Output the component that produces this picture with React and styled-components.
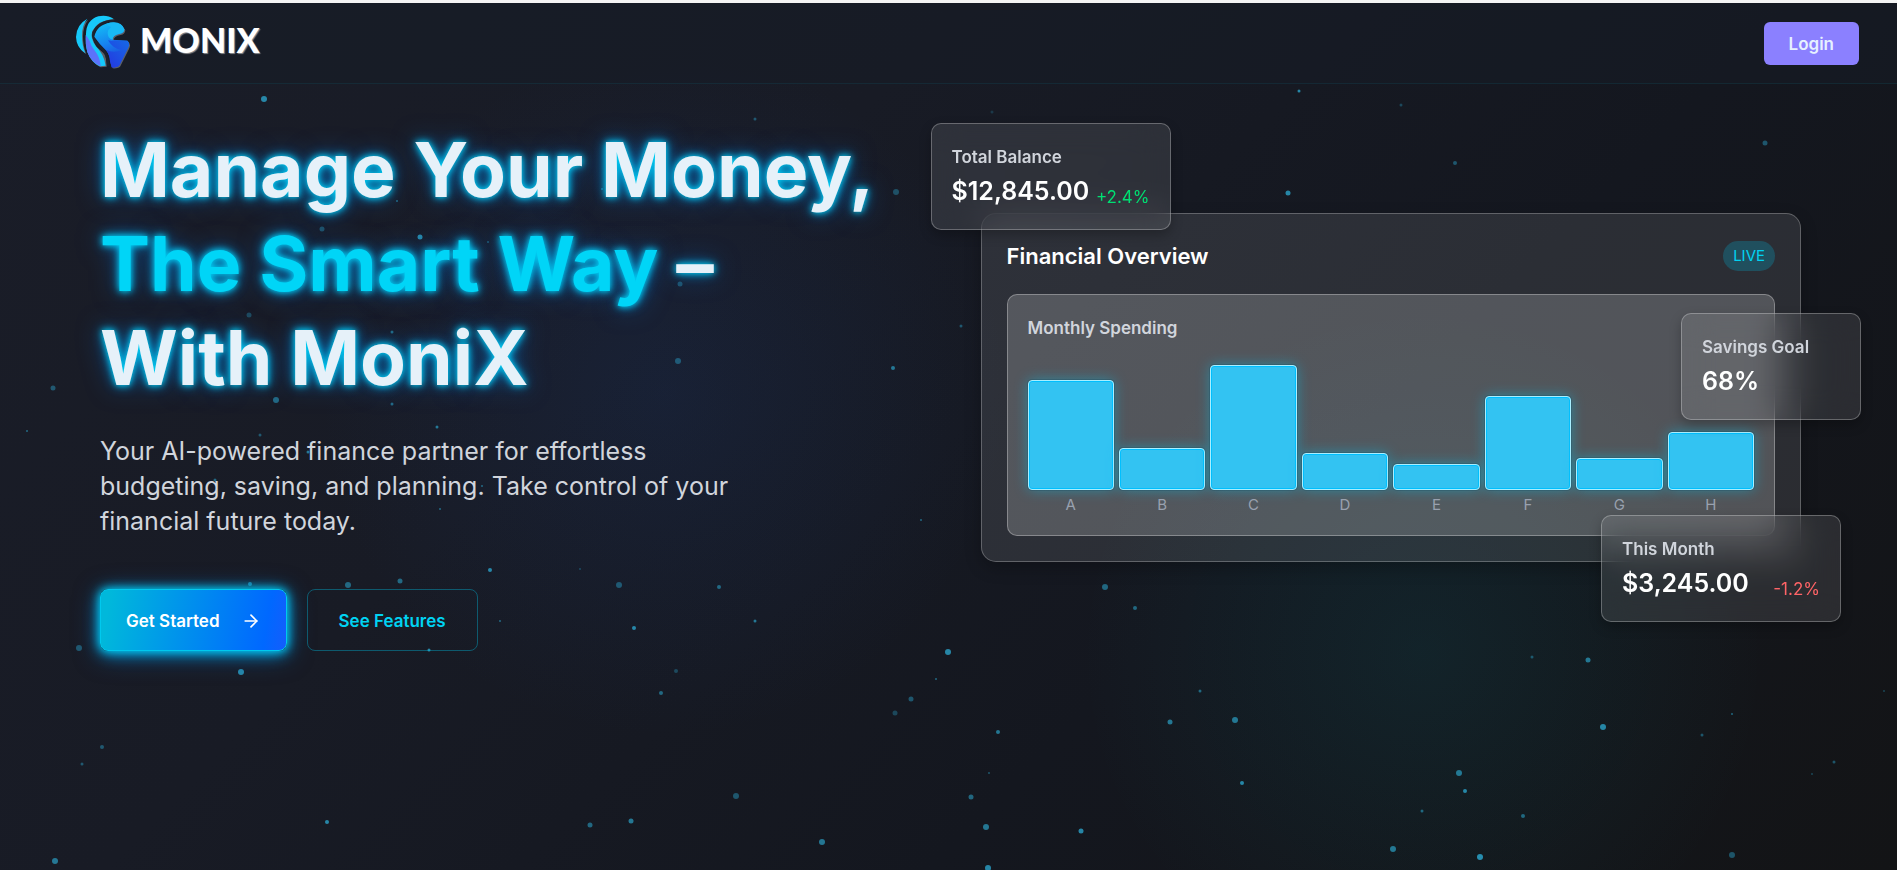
import React from 'react';
import styled, { createGlobalStyle } from 'styled-components';
import { ArrowRight } from 'lucide-react';

const GlobalStyle = createGlobalStyle`
  *, *::before, *::after { box-sizing: border-box; }
  body {
    margin: 0;
    background: #15171d;
    font-family: Inter, "Liberation Sans", sans-serif;
  }
  h1, h2, h3, p { margin: 0; }
  button { font-family: inherit; cursor: pointer; }
`;

const Page = styled.div`
  position: relative;
  isolation: isolate;
  display: flex;
  flex-direction: column;
  min-height: 100vh;
  overflow: hidden;
  border-top: 3px solid #f4f4f4;
  background:
    radial-gradient(circle at 75% 75%, rgba(0, 190, 200, 0.08), transparent 22%),
    radial-gradient(circle at 35% 45%, rgba(28, 70, 150, 0.15), transparent 26%),
    linear-gradient(135deg, #1a1d28 0%, #181b25 35%, #14171f 65%, #131416 100%);
`;

const Particles = styled.svg`
  position: absolute;
  inset: 0;
  z-index: -1;
  width: 100%;
  height: 100%;
`;

const Header = styled.header`
  display: flex;
  align-items: center;
  justify-content: space-between;
  height: 81px;
  padding: 0 38px 0 75px;
  border-bottom: 1px solid rgba(0, 211, 242, 0.08);
  background: rgba(22, 28, 37, 0.5);
`;

const Logo = styled.a`
  display: flex;
  align-items: flex-start;
  gap: 9px;
  padding-bottom: 2px;
  color: #ffffff;
  font: 900 34px/52px Lato, "Open Sans", sans-serif;
  text-decoration: none;
  text-shadow: 1px 1px 1px rgba(190, 190, 190, 0.7);
`;

const LoginButton = styled.button`
  padding: 11px 25px 9px;
  border: 0;
  border-radius: 6px;
  background: #8b80ff;
  color: #e6f1ff;
  font-size: 17px;
  font-weight: 600;
  line-height: 23px;
`;

const Hero = styled.main`
  display: grid;
  grid-template-columns: repeat(2, minmax(0, 1fr));
  gap: 60px;
  padding: 39px 96px 40px 100px;
`;

const Headline = styled.h1`
  color: #e6f1f9;
  font-size: 75px;
  font-weight: 700;
  line-height: 94px;
  white-space: nowrap;
  text-shadow: 0 0 6px #00d5f7, 0 0 12px rgba(0, 170, 235, 0.9), 0 0 26px rgba(0, 110, 220, 0.6);
`;

const Accent = styled.span`
  color: #00d5f7;
`;

const Lead = styled.p`
  max-width: 640px;
  margin-top: 29px;
  color: #d1d5dc;
  font-size: 25px;
  line-height: 35px;
`;

const Actions = styled.div`
  display: flex;
  gap: 20px;
  margin-top: 50px;
`;

const ActionButton = styled.button`
  display: flex;
  align-items: center;
  gap: 21px;
  height: 62px;
  padding: 2px ${({ $primary }) => ($primary ? 25 : 31)}px 0;
  border: 1px solid ${({ $primary }) => ($primary ? '#00c9ee' : 'rgba(0, 184, 219, 0.4)')};
  border-radius: 8px;
  background: ${({ $primary }) =>
    $primary ? 'linear-gradient(100deg, #00b8db 5%, #0068ff 88%, #155dfc)' : 'transparent'};
  color: ${({ $primary }) => ($primary ? '#ffffff' : '#00d3f2')};
  font-size: 17px;
  font-weight: 600;
  box-shadow: ${({ $primary }) =>
    $primary
      ? '0 0 10px #00d5f7, 0 2px 16px rgba(0, 170, 235, 0.9), 0 4px 26px rgba(0, 120, 220, 0.5)'
      : 'none'};
`;

const Dashboard = styled.section`
  position: relative;
  align-self: start;
  padding-top: 90px;
`;

const Panel = styled.div`
  padding: 24px 25px 25px;
  border: 1px solid rgba(255, 255, 255, 0.25);
  border-radius: 15px;
  background: rgba(255, 255, 255, 0.1);
  box-shadow: 0 6px 16px rgba(0, 0, 0, 0.25);
`;

const PanelHeader = styled.div`
  display: flex;
  align-items: center;
  justify-content: space-between;
  height: 36px;
  margin-bottom: 20px;
`;

const PanelTitle = styled.h2`
  color: #ffffff;
  font-size: 22px;
  font-weight: 600;
  line-height: 36px;
`;

const LiveBadge = styled.span`
  padding: 5px 10px;
  border-radius: 15px;
  background: rgba(0, 184, 219, 0.25);
  color: #00d3f2;
  font-size: 15px;
  line-height: 20px;
`;

const Chart = styled.div`
  padding: 20px;
  border: 1px solid rgba(255, 255, 255, 0.3);
  border-radius: 10px;
  background: rgba(255, 255, 255, 0.19);
`;

const ChartTitle = styled.h3`
  color: #d1d5dc;
  font-size: 17px;
  font-weight: 600;
  line-height: 27px;
`;

const Bars = styled.div`
  display: flex;
  align-items: flex-end;
  gap: 5px;
  height: 173px;
`;

const Column = styled.div`
  flex: 1;
  color: #99a1af;
  font-size: 15px;
  line-height: 20px;
  text-align: center;
`;

const Bar = styled.div`
  margin-bottom: 5px;
  border: 1px solid #a9efff;
  border-radius: 4px;
  background: #33c3f2;
  box-shadow: inset 0 0 0 1px #00bfff, 0 0 0 1px rgba(20, 60, 80, 0.25), 0 0 14px rgba(0, 200, 245, 0.45);
`;

const FloatCard = styled.article`
  position: absolute;
  width: ${({ $narrow }) => ($narrow ? 180 : 240)}px;
  padding: 20px;
  border: 1px solid rgba(255, 255, 255, 0.28);
  border-radius: 10px;
  background: rgba(255, 255, 255, 0.1);
  backdrop-filter: blur(16px);
  box-shadow: 0 5px 12px rgba(0, 0, 0, 0.25);
`;

const BalanceCard = styled(FloatCard)`
  top: 0;
  left: -50px;
`;

const SavingsCard = styled(FloatCard)`
  top: 190px;
  right: -60px;
`;

const MonthCard = styled(FloatCard)`
  right: -40px;
  bottom: -60px;
`;

const CardLabel = styled.p`
  color: #d1d5dc;
  font-size: 17px;
  font-weight: 600;
  line-height: 27px;
`;

const CardFigures = styled.div`
  display: flex;
  align-items: flex-end;
  justify-content: space-between;
  margin-top: 3px;
`;

const Amount = styled.strong`
  color: #ffffff;
  font-size: 25px;
  font-weight: 600;
  line-height: 35px;
`;

const Change = styled.span`
  color: ${({ $down }) => ($down ? '#ff6467' : '#00df72')};
  font-size: 17px;
  line-height: 24px;
`;

const spending = [
  { label: 'A', height: 110 },
  { label: 'B', height: 42 },
  { label: 'C', height: 125 },
  { label: 'D', height: 37 },
  { label: 'E', height: 26 },
  { label: 'F', height: 94 },
  { label: 'G', height: 32 },
  { label: 'H', height: 58 },
];

// x, y, radius, opacity
const particles = [
  [264, 99, 3, 0.7], [397, 201, 1, 0.5], [322, 229, 2.5, 0.35], [420, 237, 2.5, 0.7], [488, 242, 1, 0.4],
  [249, 315, 2.5, 0.3], [276, 400, 3, 0.5], [392, 332, 1.5, 0.5], [392, 404, 1.5, 0.5], [755, 119, 1.5, 0.4],
  [896, 192, 3, 0.35], [680, 284, 2.5, 0.35], [678, 361, 3, 0.4], [893, 368, 2, 0.6], [602, 189, 1, 0.5],
  [437, 427, 1.5, 0.6], [260, 435, 1.5, 0.4], [308, 452, 1.5, 0.6], [142, 478, 1.5, 0.6], [215, 480, 1.5, 0.5],
  [482, 486, 1, 0.5], [440, 509, 1, 0.5], [490, 570, 2, 0.7], [580, 569, 1, 0.3], [348, 585, 3, 0.5],
  [400, 581, 2.5, 0.5], [619, 585, 3, 0.4], [719, 587, 2, 0.5], [250, 584, 2, 0.6], [500, 621, 1, 0.5],
  [634, 628, 2, 0.7], [755, 621, 1.5, 0.6], [429, 650, 1.5, 0.7], [241, 672, 3, 0.7], [992, 112, 1.5, 0.2],
  [1288, 193, 2.5, 0.7], [961, 326, 1.5, 0.4], [79, 648, 3, 0.4], [102, 747, 2, 0.4], [82, 764, 1.5, 0.4],
  [55, 861, 3, 0.6], [327, 822, 2, 0.7], [590, 825, 2.5, 0.5], [631, 821, 2.5, 0.6], [736, 796, 3, 0.4],
  [822, 842, 3, 0.6], [676, 671, 2, 0.3], [661, 693, 2, 0.5], [911, 699, 2.5, 0.4], [895, 713, 2.5, 0.3],
  [936, 679, 1, 0.5], [948, 652, 3, 0.7], [1200, 691, 1.5, 0.5], [1170, 722, 2.5, 0.6], [1235, 720, 3, 0.6],
  [998, 732, 2, 0.6], [989, 773, 1, 0.4], [971, 797, 2.5, 0.5], [986, 827, 3, 0.6], [1081, 831, 2.5, 0.7],
  [988, 868, 3, 0.7], [1532, 657, 1.5, 0.4], [1588, 660, 2.5, 0.6], [1603, 727, 3, 0.7], [1702, 735, 1.5, 0.4],
  [1732, 714, 1, 0.5], [1884, 691, 1, 0.3], [1834, 762, 1.5, 0.4], [1812, 774, 1, 0.3], [1459, 773, 3, 0.6],
  [1465, 791, 2, 0.7], [1242, 783, 2, 0.7], [1422, 811, 1.5, 0.5], [1523, 816, 2, 0.5], [1393, 849, 3, 0.6],
  [1480, 857, 3, 0.75], [1732, 855, 3, 0.4], [1299, 91, 1.5, 0.7], [1401, 105, 1.5, 0.3], [1455, 163, 2, 0.4],
  [1765, 143, 2.5, 0.4], [53, 388, 2.5, 0.4], [27, 431, 1, 0.5], [921, 520, 1, 0.5], [1105, 587, 3, 0.5],
  [1135, 608, 2, 0.5],
];

function LogoMark() {
  return (
    <svg width="56" height="56" viewBox="46 40 168 168" aria-hidden="true">
      <defs>
        <linearGradient id="core" x1="0.3" y1="0" x2="0.6" y2="1">
          <stop offset="0" stopColor="#12bdf6" />
          <stop offset="0.45" stopColor="#1782ee" />
          <stop offset="1" stopColor="#1b35d4" />
        </linearGradient>
        <linearGradient id="face" x1="0" y1="1" x2="1" y2="0">
          <stop offset="0" stopColor="#2436e0" />
          <stop offset="1" stopColor="#1669e6" />
        </linearGradient>
      </defs>
      <g fill="#5b6068" transform="translate(3 3)">
        <path d="M83 54 Q50 72 49 109 Q50 141 77 158 Q67 134 67 105 Q67 73 83 54Z" />
        <path d="M79 100 Q80 58 116 47 Q142 41 162 55 Q116 58 98 91 Q91 112 108 136 L135 160 L138 195 L120 197 Q94 184 83 154 Q76 130 79 100Z" />
        <path d="M104 108 Q111 72 151 66 Q184 62 194 86 Q193 98 180 100 Q158 104 159 117 L203 120 Q212 128 205 142 L179 194 Q174 201 156 200 L151 181 L149 157 Q132 139 104 108Z" />
      </g>
      <path fill="#16c9fa" d="M83 54 Q50 72 49 109 Q50 141 77 158 Q67 134 67 105 Q67 73 83 54Z" />
      <path fill="#16c9fa" d="M79 100 Q80 58 116 47 Q142 41 162 55 Q116 58 98 91 Q91 112 108 136 Q134 162 138 195 L120 197 Q94 184 83 154 Q76 130 79 100Z" />
      <path fill="#5c72fa" d="M78 103 Q84 110 90 121 Q94 137 106 151 Q121 169 123 197 Q94 184 83 154 Q77 132 78 103Z" />
      {/* dark seam between the middle band and the core */}
      <path fill="none" stroke="#1c222d" strokeWidth="7" d="M163 60 Q116 62 101 96 Q97 115 118 134 Q146 160 146 196" />
      <path fill="url(#core)" d="M104 108 Q111 72 151 66 Q184 62 194 86 Q193 98 180 100 Q158 104 159 117 L203 120 Q212 128 205 142 L179 194 Q174 201 156 200 L151 181 Q151 163 140 150 Q120 132 104 108Z" />
      <path fill="#18b9f5" d="M140 69 Q183 56 194 86 Q194 97 179 99 Q158 103 159 117 Q143 112 144 96 Q145 86 154 79 Q143 74 140 69Z" />
      <path fill="url(#face)" d="M145 119 Q155 121 166 119 L203 120 Q212 128 205 142 L179 194 Q174 201 156 200 L151 181 Q150 163 139 148 Q160 158 187 149 Q160 145 145 119Z" />
    </svg>
  );
}

export default function App() {
  return (
    <Page>
      <GlobalStyle />
      <Particles viewBox="0 3 1897 867" preserveAspectRatio="xMidYMid slice" aria-hidden="true">
        {particles.map(([x, y, r, opacity]) => (
          <circle key={`${x}-${y}`} cx={x} cy={y} r={r} fill="#2eb5e0" opacity={opacity} />
        ))}
      </Particles>

      <Header>
        <Logo href="#home">
          <LogoMark />
          MONIX
        </Logo>
        <LoginButton type="button">Login</LoginButton>
      </Header>

      <Hero>
        <section>
          <Headline>
            Manage Your Money,
            <br />
            <Accent>The Smart Way</Accent> –
            <br />
            With MoniX
          </Headline>
          <Lead>
            Your AI-powered finance partner for effortless budgeting, saving, and planning. Take
            control of your financial future today.
          </Lead>
          <Actions>
            <ActionButton type="button" $primary>
              Get Started
              <ArrowRight size={20} strokeWidth={2} aria-hidden="true" />
            </ActionButton>
            <ActionButton type="button">See Features</ActionButton>
          </Actions>
        </section>

        <Dashboard>
          <Panel>
            <PanelHeader>
              <PanelTitle>Financial Overview</PanelTitle>
              <LiveBadge>LIVE</LiveBadge>
            </PanelHeader>
            <Chart>
              <ChartTitle>Monthly Spending</ChartTitle>
              <Bars>
                {spending.map(({ label, height }) => (
                  <Column key={label}>
                    <Bar style={{ height }} />
                    {label}
                  </Column>
                ))}
              </Bars>
            </Chart>
          </Panel>

          <BalanceCard>
            <CardLabel>Total Balance</CardLabel>
            <CardFigures>
              <Amount>$12,845.00</Amount>
              <Change>+2.4%</Change>
            </CardFigures>
          </BalanceCard>
          <SavingsCard $narrow>
            <CardLabel>Savings Goal</CardLabel>
            <CardFigures>
              <Amount>68%</Amount>
            </CardFigures>
          </SavingsCard>
          <MonthCard>
            <CardLabel>This Month</CardLabel>
            <CardFigures>
              <Amount>$3,245.00</Amount>
              <Change $down>-1.2%</Change>
            </CardFigures>
          </MonthCard>
        </Dashboard>
      </Hero>
    </Page>
  );
}
